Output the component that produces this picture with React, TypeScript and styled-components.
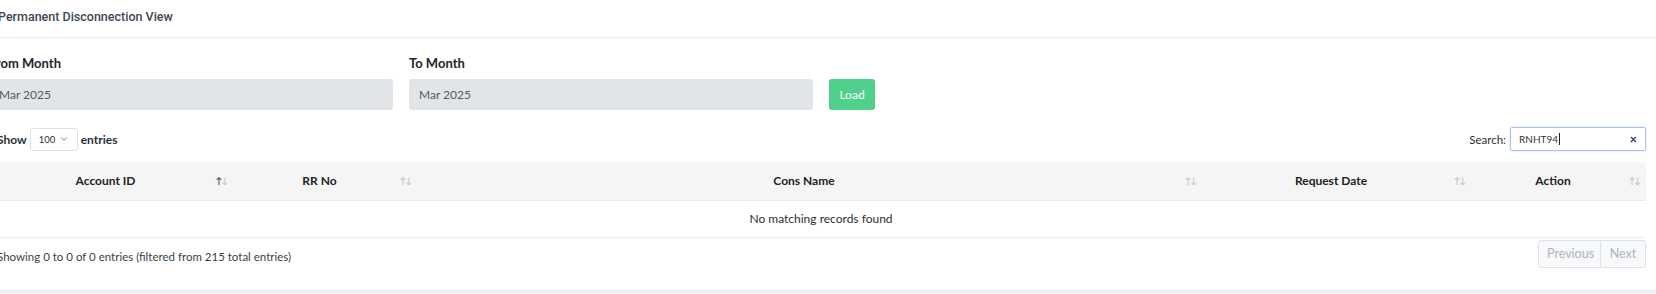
import React from "react";
import styled, { createGlobalStyle } from "styled-components";
import { ChevronDown } from "lucide-react";

// vue "Permanent Disconnection View" : filtre mois + table DataTables vide

const GlobalStyle = createGlobalStyle`
  html, body {
    margin: 0;
    padding: 0;
    overflow: hidden;
    background: #f1f3f6;
  }
  body {
    min-height: 100vh;
    font-family: "Lato", "Liberation Sans", sans-serif;
    color: #212529;
  }
`;

const columns = [
  { label: "Account ID", width: 244, active: true },
  { label: "RR No", width: 184 },
  { label: "Cons Name", width: 785 },
  { label: "Request Date", width: 269 },
  { label: "Action", width: 175 },
];

export default function App() {
  return (
    <>
      <GlobalStyle />
      <StyledCard>
        <StyledHeader>Permanent Disconnection View</StyledHeader>
        <StyledBody>
          <StyledForm>
            <StyledField>
              <StyledLabel>From Month</StyledLabel>
              <StyledInput>Mar 2025</StyledInput>
            </StyledField>
            <StyledField>
              <StyledLabel>To Month</StyledLabel>
              <StyledInput>Mar 2025</StyledInput>
            </StyledField>
            <StyledLoad>Load</StyledLoad>
          </StyledForm>

          <StyledToolbar>
            <StyledLength>
              Show
              <StyledSelect>
                100 <ChevronDown size={10} strokeWidth={1.6} />
              </StyledSelect>
              entries
            </StyledLength>
            <StyledSearch>
              Search:
              <StyledSearchBox>
                <span>
                  RNHT94<StyledCaret />
                </span>
                <StyledClear>×</StyledClear>
              </StyledSearchBox>
            </StyledSearch>
          </StyledToolbar>

          <StyledTable>
            <colgroup>
              {columns.map((c) => (
                <col key={c.label} style={{ width: c.width }} />
              ))}
            </colgroup>
            <thead>
              <tr>
                {columns.map((c) => (
                  <StyledTh key={c.label}>
                    {c.label}
                    <StyledSort>
                      <StyledArrow $dark={c.active}>↑</StyledArrow>
                      <StyledArrow>↓</StyledArrow>
                    </StyledSort>
                  </StyledTh>
                ))}
              </tr>
            </thead>
            <tbody>
              <tr>
                <StyledEmpty colSpan={5}>No matching records found</StyledEmpty>
              </tr>
            </tbody>
          </StyledTable>

          <StyledFooter>
            <StyledInfo>
              Showing 0 to 0 of 0 entries (filtered from 215 total entries)
            </StyledInfo>
            <StyledPager>
              <StyledPageBtn>Previous</StyledPageBtn>
              <StyledPageBtn>Next</StyledPageBtn>
            </StyledPager>
          </StyledFooter>
        </StyledBody>
      </StyledCard>
    </>
  );
}

const StyledCard = styled.div`
  margin-left: -20px;
  width: 1676px;
  background: #fff;
  box-shadow: 0 1px 3px rgba(0, 0, 0, 0.05);
`;

const StyledHeader = styled.div`
  box-sizing: border-box;
  height: 38px;
  padding: 9px 18px 0;
  line-height: 16px;
  border-bottom: 1px solid #eceef1;
  font-family: "Roboto", "Liberation Sans", sans-serif;
  font-size: 12.5px;
  font-weight: 500;
  color: #3f4755;
`;

const StyledBody = styled.div`
  padding: 17px 10px 19px 9px;
`;

const StyledForm = styled.div`
  display: flex;
  align-items: flex-end;
  gap: 16px;
`;

const StyledField = styled.div`
  display: flex;
  flex-direction: column;
  width: 404px;
`;

const StyledLabel = styled.label`
  font-size: 13px;
  font-weight: 700;
  line-height: 16px;
  margin-bottom: 8px;
  color: #212529;
`;

const StyledInput = styled.div`
  box-sizing: border-box;
  height: 31px;
  line-height: 31px;
  padding: 0 10px;
  background: #e2e5e8;
  border-radius: 3px;
  font-size: 12px;
  color: #555b63;
`;

const StyledLoad = styled.button`
  box-sizing: border-box;
  height: 31px;
  width: 46px;
  padding: 0;
  border: none;
  border-radius: 3px;
  background: #4fd18b;
  color: #fff;
  font-family: "Lato", "Liberation Sans", sans-serif;
  font-size: 12px;
`;

const StyledToolbar = styled.div`
  display: flex;
  justify-content: space-between;
  align-items: center;
  margin-top: 17px;
  height: 24px;
`;

const StyledLength = styled.div`
  display: flex;
  align-items: center;
  gap: 3px;
  padding-left: 8px;
  font-size: 12px;
  font-weight: 700;
  color: #2b2f33;
`;

const StyledSelect = styled.div`
  box-sizing: border-box;
  display: flex;
  align-items: center;
  gap: 4px;
  width: 48px;
  height: 23px;
  padding-left: 8px;
  border: 1px solid #dee2e6;
  border-radius: 3px;
  font-size: 9.5px;
  font-weight: 400;
  color: #333;
`;

const StyledSearch = styled.label`
  display: flex;
  align-items: center;
  gap: 4px;
  font-size: 11.5px;
  color: #2b2f33;
`;

const StyledSearchBox = styled.div`
  box-sizing: border-box;
  display: flex;
  align-items: center;
  justify-content: space-between;
  width: 136px;
  height: 24px;
  padding: 0 8px 0 8px;
  border: 1px solid #a9bff0;
  border-radius: 2px;
  box-shadow: 0 0 2px rgba(90, 130, 220, 0.35);
  font-size: 10px;
  color: #333;
`;

const StyledCaret = styled.span`
  display: inline-block;
  width: 1px;
  height: 12px;
  margin-left: 1px;
  vertical-align: -2px;
  background: #222;
`;

const StyledClear = styled.span`
  font-size: 13px;
  font-weight: 700;
  color: #2e4470;
`;

const StyledTable = styled.table`
  margin-top: 11px;
  width: 1657px;
  table-layout: fixed;
  border-collapse: collapse;
`;

const StyledTh = styled.th`
  position: relative;
  box-sizing: border-box;
  height: 38px;
  padding: 0 22px 0 11px;
  background: #f5f5f5;
  border-bottom: 1px solid #eaeaea;
  font-size: 12px;
  font-weight: 700;
  text-align: center;
  color: #222;
`;

const StyledSort = styled.span`
  position: absolute;
  right: 6px;
  top: 13px;
  font-size: 9px;
  line-height: 12px;
  letter-spacing: -1px;
`;

const StyledArrow = styled.span<{ $dark?: boolean }>`
  color: ${(p) => (p.$dark ? "#4a4f55" : "#c6c9cd")};
`;

const StyledEmpty = styled.td`
  box-sizing: border-box;
  height: 37px;
  padding-left: 8px;
  border-bottom: 1px solid #ececec;
  text-align: center;
  font-size: 12px;
  color: #2b2f33;
`;

const StyledFooter = styled.div`
  display: flex;
  justify-content: space-between;
  align-items: flex-start;
  padding-top: 2px;
`;

const StyledInfo = styled.div`
  margin-top: 3px;
  padding-left: 8px;
  font-size: 11.5px;
  line-height: 28px;
  color: #3a3f45;
`;

const StyledPager = styled.div`
  display: flex;
`;

const StyledPageBtn = styled.button`
  box-sizing: border-box;
  height: 28px;
  padding: 0 8px;
  border: 1px solid #dee2e6;
  background: #f8f9fa;
  color: #aeb4bb;
  font-family: "Lato", "Liberation Sans", sans-serif;
  font-size: 12.5px;
  &:first-child {
    border-radius: 4px 0 0 4px;
    width: 63px;
  }
  &:last-child {
    border-left: none;
    border-radius: 0 4px 4px 0;
    width: 45px;
  }
`;
